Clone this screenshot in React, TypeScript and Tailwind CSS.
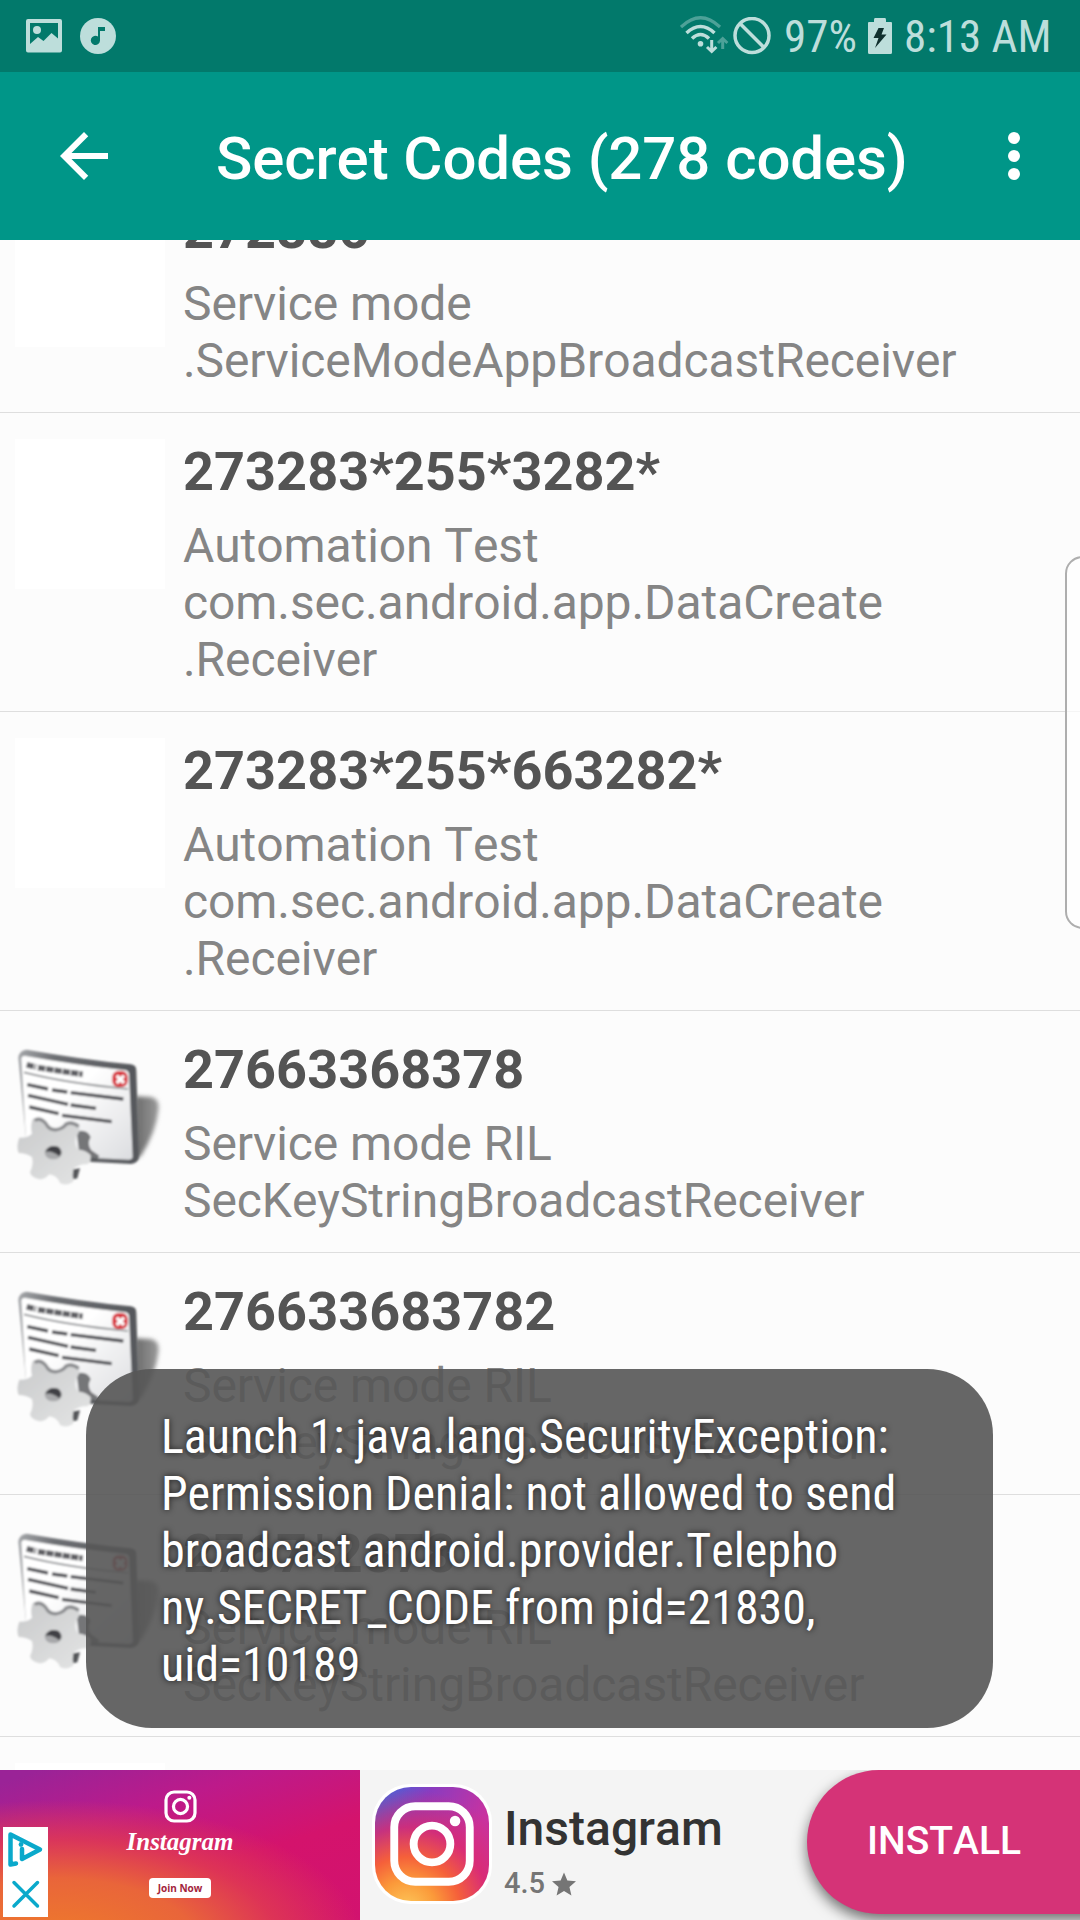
import React from "react";

const codes = [
  { code: "272886", lines: ["Service mode", ".ServiceModeAppBroadcastReceiver"], icon: "blank" },
  { code: "273283*255*3282*", lines: ["Automation Test", "com.sec.android.app.DataCreate", ".Receiver"], icon: "blank" },
  { code: "273283*255*663282*", lines: ["Automation Test", "com.sec.android.app.DataCreate", ".Receiver"], icon: "blank" },
  { code: "27663368378", lines: ["Service mode RIL", "SecKeyStringBroadcastReceiver"], icon: "window" },
  { code: "276633683782", lines: ["Service mode RIL", "SecKeyStringBroadcastReceiver"], icon: "window" },
  { code: "2767*2878", lines: ["Service mode RIL", "SecKeyStringBroadcastReceiver"], icon: "window" },
];

const toastLines = [
  "Launch 1: java.lang.SecurityException:",
  "Permission Denial: not allowed to send",
  "broadcast android.provider.Telepho",
  "ny.SECRET_CODE from pid=21830,",
  "uid=10189",
];

function WindowIcon() {
  return (
    <svg className="size-[150px]" viewBox="47 22 450 450">
      <defs>
        <linearGradient id="page" x1="0" y1="0" x2="1" y2="1">
          <stop offset="0.4" stopColor="#ffffff" />
          <stop offset="1" stopColor="#dcdde0" />
        </linearGradient>
        <linearGradient id="frame" x1="0" y1="0" x2="1" y2="0">
          <stop offset="0" stopColor="#a4a6a9" />
          <stop offset="0.3" stopColor="#6d6f73" />
          <stop offset="1" stopColor="#55575b" />
        </linearGradient>
        <linearGradient id="shade" x1="0" y1="0" x2="1" y2="0">
          <stop offset="0" stopColor="#6b6b6b" />
          <stop offset="1" stopColor="#9a9a9a" />
        </linearGradient>
        <linearGradient id="gear" x1="0" y1="0" x2="1" y2="1">
          <stop offset="0" stopColor="#c9cacb" />
          <stop offset="1" stopColor="#e4e5e5" />
        </linearGradient>
        <filter id="soft" x="-20%" y="-20%" width="140%" height="140%">
          <feGaussianBlur stdDeviation="6" />
        </filter>
        <filter id="smooth">
          <feGaussianBlur stdDeviation="3" />
        </filter>
      </defs>
      <path d="M408 200 L455 202 Q480 208 478 236 Q470 310 425 378 L408 388 Z" fill="url(#shade)" filter="url(#soft)" />
      <g filter="url(#smooth)">
        <path d="M57 84 Q60 62 82 60 Q240 88 394 104 Q412 106 411 124 L419 376 Q420 400 396 403 L262 396 L82 345 Z" fill="url(#frame)" />
        <path d="M66 88 Q66 78 78 79 Q230 106 380 122 Q388 124 389 132 L400 382 Q398 390 388 390 L270 384 L80 330 Z" fill="url(#page)" />
        <path d="M74 128 Q200 160 386 178" stroke="#8b8d90" strokeWidth="5" fill="none" />
        <g stroke="#4d4e52" strokeWidth="10" fill="none">
          <path d="M82 105 L110 112 M116 114 L250 134" strokeWidth="17" stroke="#606165" strokeDasharray="22 3" />
          <path d="M84 165 L146 178 M158 181 L204 187 M214 189 L372 208" />
          <path d="M86 197 L206 224 M214 226 L290 236" />
          <path d="M90 232 L178 252 M188 257 L337 276" />
        </g>
        <rect x="339" y="124" width="46" height="48" rx="18" fill="#d8303b" />
        <path d="M352 138 L374 160 M374 138 L352 160" stroke="#fff" strokeWidth="10" />
        <path d="M232 306 Q262 296 274 322 Q262 344 276 362 L300 378 L290 396 L240 372 Z" fill="#56575a" opacity="0.8" />
        <path d="M214 420 L242 416 L234 446 L216 450 Z" fill="#55575a" />
        <path
          d="M100 268 Q122 256 142 276 Q150 298 172 296 Q190 292 196 278 Q216 268 240 286 Q244 304 230 322 Q222 344 236 360 Q258 360 274 376 Q276 398 264 404 Q240 402 222 418 Q218 438 222 456 Q200 470 182 460 Q174 438 150 434 Q134 452 118 448 Q96 444 92 428 Q104 404 98 382 Q80 370 58 370 Q50 350 60 324 Q84 326 98 312 Q92 288 100 268 Z"
          fill="url(#gear)"
        />
        <path d="M106 272 Q124 262 140 282 Q150 302 172 300 Q192 296 200 284 Q216 274 238 290" stroke="#8b8c8f" strokeWidth="10" fill="none" />
        <ellipse cx="162" cy="369" rx="26" ry="20" fill="#a7a8aa" />
        <path d="M138 366 Q150 342 178 352 Q192 366 180 380 Q160 362 138 366 Z" fill="#3f4044" />
      </g>
    </svg>
  );
}

function InstagramGlyph({ className, width }: { className: string; width: number }) {
  return (
    <svg className={className} viewBox="0 0 82 82" fill="none" stroke="#fff" strokeWidth={width}>
      <rect x="5" y="5" width="72" height="72" rx="20" />
      <circle cx="41" cy="41" r="17.5" />
      <circle cx="63" cy="19" r="5" fill="#fff" stroke="none" />
    </svg>
  );
}

function StatusBar() {
  return (
    <div className="flex h-[72px] items-center bg-[#02796b] text-[#bddedb]">
      <svg className="ml-[26px] h-9 w-9 shrink-0" viewBox="0 0 36 36" fill="currentColor">
        <path fillRule="evenodd" d="M2 1 H34 Q36 1 36 3 V32.5 Q36 34.5 34 34.5 H2 Q0 34.5 0 32.5 V3 Q0 1 2 1 Z M4 5 V26 L12 19 L17.5 23 L25.5 15 L32 20.5 V5 Z" />
        <circle cx="11" cy="12" r="4" />
      </svg>
      <svg className="ml-[18px] h-9 w-9 shrink-0" viewBox="0 0 36 36">
        <circle cx="18" cy="18" r="18" fill="currentColor" />
        <path d="M18 9 H25 V13 H20 V22.5 A4.6 4.6 0 1 1 18 18.6 Z" fill="#02796b" />
      </svg>
      <svg className="ml-[564px] h-[40px] w-[50px] shrink-0" viewBox="0 0 50 40" fill="none" stroke="currentColor">
        <path d="M1 11 Q20.500 -7.500 40 11" strokeWidth="3.200" opacity="0.4" />
        <path d="M6.500 17 Q20.500 4 34.500 17" strokeWidth="3.500" />
        <path d="M12 22.500 Q20.500 14.500 29 22.500" strokeWidth="3.500" />
        <circle cx="20.500" cy="27.800" r="2.800" fill="currentColor" stroke="none" />
        <path d="M31.700 24 V34.500 M27 31 L31.700 35.500 L36.400 31" strokeWidth="3" />
        <path d="M42.700 33 V24 M38 27 L42.700 22.500 L47.400 27" strokeWidth="3" opacity="0.4" />
      </svg>
      <svg className="ml-[3px] h-[38px] w-[38px] shrink-0" viewBox="0 0 38 38" fill="none" stroke="currentColor" strokeWidth="3.500">
        <circle cx="19" cy="18.500" r="17" />
        <path d="M7 6.500 L31 30.500" />
      </svg>
      <span className="ml-[13px] w-[84px] shrink-0 whitespace-nowrap pt-0.5 font-['Roboto_Condensed',Roboto,sans-serif] text-[45px] leading-[72px]">97%</span>
      <svg className="h-9 w-6 shrink-0" viewBox="0 0 24 36">
        <path d="M7 0 H17 Q18 0 18 2 V4 H23 Q24 4 24 5 V34.500 Q24 36 22.500 36 H1.500 Q0 36 0 34.500 V5 Q0 4 1 4 H6 V2 Q6 0 7 0 Z" fill="currentColor" />
        <path d="M10.500 10 H16 L13.500 16.500 H18.500 L7 30 L10.500 20 H5.500 Z" fill="#10302e" />
      </svg>
      <span className="ml-3 shrink-0 whitespace-nowrap pt-0.5 font-['Roboto_Condensed',Roboto,sans-serif] text-[45px] leading-[72px]">8:13 AM</span>
    </div>
  );
}

function Toolbar() {
  return (
    <header className="flex h-[168px] items-center bg-[#009688] pl-12 text-white">
      <svg className="size-[72px] shrink-0" viewBox="0 0 24 24" fill="currentColor">
        <path d="M20 11H7.830l5.590-5.590L12 4l-8 8 8 8 1.410-1.410L7.830 13H20v-2z" />
      </svg>
      <h1 className="ml-24 w-[762px] shrink-0 whitespace-nowrap pt-1.5 text-[60px] font-medium leading-[72px] tracking-[-0.1px]">
        Secret Codes (278 codes)
      </h1>
      <svg className="size-[72px] shrink-0" viewBox="0 0 24 24" fill="currentColor">
        <circle cx="12" cy="6" r="2" />
        <circle cx="12" cy="12" r="2" />
        <circle cx="12" cy="18" r="2" />
      </svg>
    </header>
  );
}

function AdBanner() {
  return (
    <div className="relative flex h-[150px] overflow-hidden bg-[#f4f4f4]">
      <div className="flex w-[360px] shrink-0 flex-col items-center bg-[radial-gradient(ellipse_85%_95%_at_16%_115%,#ef7c2a_0%,#e9653a_45%,#e03c50cc_72%,#d5186a00_100%),linear-gradient(162deg,#9a2397_5%,#bd1a8a_32%,#d4136c_62%,#d2126f_100%)] text-white">
        <InstagramGlyph className="mt-5 h-[33px] w-[33px]" width={8} />
        <span className="mt-1 font-['Liberation_Serif',serif] text-[25px] font-bold italic leading-[30px]">Instagram</span>
        <span className="mt-[21px] flex h-5 w-[62px] items-center justify-center rounded bg-white font-[Open_Sans,sans-serif] text-[10px] font-bold text-[#a3253c]">
          Join Now
        </span>
      </div>
      <div className="ml-3 mt-[14px] flex size-[120px] shrink-0 items-center justify-center rounded-[38px] bg-white">
        <div className="flex size-[114px] items-center justify-center rounded-[36px] bg-[radial-gradient(circle_at_28%_108%,#fdcb5c_0%,#fb9a3a_20%,#f5603a_36%,#dd2a6ccc_56%,transparent_82%),linear-gradient(120deg,#4a62d8_8%,#8a3cc0_32%,#c832a0_70%)]">
          <InstagramGlyph className="h-[86px] w-[86px]" width={7.500} />
        </div>
      </div>
      <div className="ml-3 flex flex-col">
        <span className="mt-[31px] text-[48px] font-medium leading-[56px] text-[#333]">Instagram</span>
        <div className="mt-2 flex items-center gap-[7px] text-[#757575]">
          <span className="text-[29px] font-medium leading-[36px]">4.5</span>
          <svg className="mt-px h-6 w-6" viewBox="2 2 20 19" fill="currentColor">
            <path d="M12 17.270L18.180 21l-1.640-7.030L22 9.240l-7.190-.610L12 2 9.190 8.630 2 9.240l5.460 4.730L5.820 21z" />
          </svg>
        </div>
      </div>
      <button className="absolute left-[807px] top-0 h-[144px] w-[290px] rounded-l-full bg-[#d53377] pb-0.5 pl-[60px] text-left text-[39px] font-medium text-white shadow-[0_6px_14px_rgba(0,0,0,0.55)]">
        INSTALL
      </button>
      <div className="absolute left-[3px] top-[57px] flex h-[90px] w-[45px] flex-col items-center bg-white">
        <svg className="h-[90px] w-[45px]" viewBox="0 0 45 90" fill="none" stroke="#0aa9cb" strokeLinecap="round" strokeLinejoin="round">
          <path d="M13 36.500 L7.500 37.500 V7.500 L37 22.500 L19 32 V22" strokeWidth="4.500" />
          <circle cx="18" cy="17.500" r="2.400" fill="#0aa9cb" stroke="none" />
          <path d="M11 55.500 L34.500 79 M34.500 55.500 L11 79" strokeWidth="3.500" />
        </svg>
      </div>
    </div>
  );
}

export default function App() {
  return (
    <div className="relative flex h-[1920px] w-[1080px] flex-col overflow-hidden bg-[#fcfcfc] font-[Roboto,sans-serif] [font-kerning:none]">
      <StatusBar />
      <Toolbar />

      {/* Code list, scrolled part of the way down */}
      <main className="flex h-[1530px] flex-col overflow-hidden">
        <div className="-mt-[69px] flex flex-col">
          {codes.map((item) => (
            <div key={item.code} className="flex border-b border-[#dedede] pb-[23px] pl-[15px] pt-[26px]">
              {item.icon === "window" ? <WindowIcon /> : <div className="size-[150px] shrink-0 bg-white" />}
              <div className="ml-[18px] whitespace-nowrap">
                <div className="pt-px text-[54px] font-bold leading-[64px] tracking-[0.05px] text-[#545454]">{item.code}</div>
                <div className="mt-[13px] text-[48px] leading-[57px] tracking-[-0.08px] text-[#858585]">
                  {item.lines.map((line) => (
                    <div key={line}>{line}</div>
                  ))}
                </div>
              </div>
            </div>
          ))}
          <div className="pl-[15px] pt-[26px]">
            <div className="size-[150px] bg-white" />
          </div>
        </div>
      </main>

      <AdBanner />

      {/* Edge panel handle */}
      <div className="absolute -right-5 top-[556px] h-[373px] w-[35px] rounded-[20px] border-2 border-[#aeaeae] bg-white/70" />

      {/* Toast */}
      <div className="absolute left-[86px] top-[1369px] h-[359px] w-[907px] rounded-[66px] bg-[#575757]/91 pl-[75px] pt-[39px]">
        {toastLines.map((line) => (
          <div
            key={line}
            className="whitespace-nowrap font-['Roboto_Condensed',Roboto,sans-serif] text-[48px] leading-[57px] text-white [text-shadow:0_0_6px_rgba(0,0,0,0.75)]"
          >
            {line}
          </div>
        ))}
      </div>
    </div>
  );
}
